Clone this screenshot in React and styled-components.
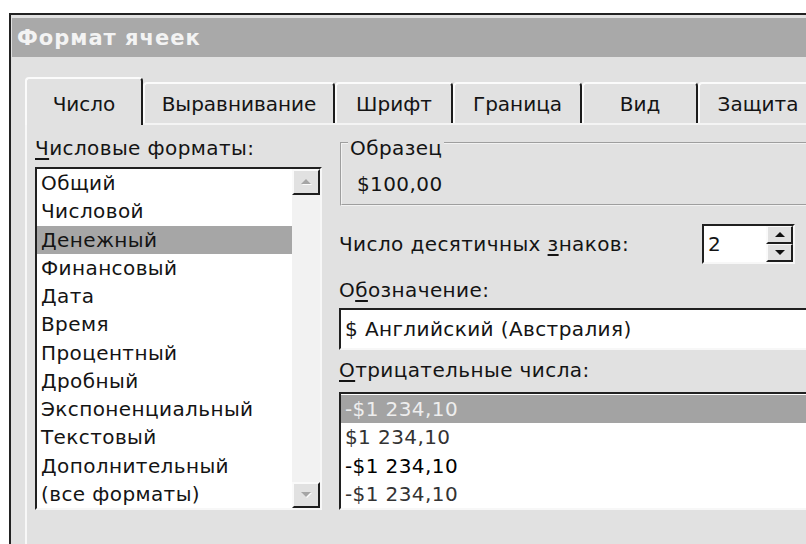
import React from "react";
import styled, { createGlobalStyle } from "styled-components";

const GlobalStyle = createGlobalStyle`
  html, body {
    margin: 0;
    padding: 0;
    background: #fff;
    overflow: hidden;
  }
  body {
    font-family: "DejaVu Sans", "Liberation Sans", sans-serif;
    font-size: 20px;
    color: #141414;
  }
`;

const Page = styled.div`
  width: 806px;
  height: 544px;
  padding: 13px 0 0 9px;
  box-sizing: border-box;
  overflow: hidden;
`;

const Dialog = styled.div`
  width: 860px;
  height: 560px;
  background: #e1e1e1;
  border-top: 2px solid #222;
  border-left: 2px solid #222;
  padding: 3px 0 0 1px;
  box-sizing: border-box;
`;

const TitleBar = styled.div`
  height: 39px;
  background: #a9a9a9;
  color: #f3f3f3;
  font-weight: bold;
  font-size: 21px;
  display: flex;
  align-items: center;
  padding-left: 5px;
  letter-spacing: 1px;
`;

const Body = styled.div`
  padding: 20px 0 0 13px;
`;

const TabStrip = styled.div`
  display: flex;
  align-items: flex-end;
  height: 46px;
  position: relative;
  z-index: 1;
`;

const Tab = styled.div`
  flex: none;
  width: ${(p) => p.$width}px;
  height: ${(p) => (p.$active ? 48 : 41)}px;
  margin-bottom: ${(p) => (p.$active ? -2 : 0)}px;
  box-sizing: border-box;
  background: #e1e1e1;
  border-top: 2px solid #fbfbfb;
  border-left: 2px solid #fbfbfb;
  border-right: 2px solid #1c1c1c;
  border-radius: 4px 4px 0 0;
  padding-top: ${(p) => (p.$active ? 15 : 10)}px;
  line-height: 20px;
  text-align: center;
  white-space: nowrap;
`;

const Panel = styled.div`
  border-top: 2px solid #f4f4f4;
  border-left: 2px solid #f8f8f8;
  padding: 3px 0 0 8px;
  height: 420px;
  display: grid;
  grid-template-columns: 287px 500px;
  column-gap: 17px;
  align-items: start;
`;

const Column = styled.div`
  display: flex;
  flex-direction: column;
  margin-top: ${(p) => p.$offset || 0}px;
`;

const Label = styled.div`
  line-height: 20px;
  height: 20px;
  white-space: nowrap;
  letter-spacing: 0.4px;
  margin-top: ${(p) => p.$gap || 0}px;
  flex: none;
`;

const Key = styled.span`
  text-decoration: underline;
  text-underline-offset: 3px;
`;

const Sunken = styled.div`
  box-sizing: border-box;
  border-top: 2px solid #202020;
  border-left: 2px solid #202020;
  border-right: 2px solid #f7f7f7;
  border-bottom: 2px solid #f7f7f7;
  background: #fff;
`;

const FormatList = styled(Sunken)`
  margin-top: 9px;
  height: 343px;
  display: flex;
`;

const Items = styled.div`
  flex: 1;
  display: flex;
  flex-direction: column;
`;

const Item = styled.div`
  height: 28.25px;
  line-height: 28.25px;
  padding-left: 4px;
  white-space: nowrap;
  letter-spacing: 0.4px;
  background: ${(p) => (p.$selected ? p.$hl || "#a6a6a6" : "transparent")};
  color: ${(p) => p.$color || "#141414"};
`;

const ScrollBar = styled.div`
  width: 28px;
  flex: none;
  display: flex;
  flex-direction: column;
  background: #f2f2f2;
`;

const ScrollButton = styled.div`
  height: 26px;
  box-sizing: border-box;
  background: #e1e1e1;
  border-top: 2px solid #fafafa;
  border-left: 2px solid #fafafa;
  border-right: 2px solid #1e1e1e;
  border-bottom: 2px solid #1e1e1e;
  display: flex;
  align-items: center;
  justify-content: center;
`;

const Track = styled.div`
  flex: 1;
`;

const GroupBox = styled.fieldset`
  margin: 0 0 0 1px;
  padding: 0 0 10px 6px;
  border: 2px groove #f2f2f2;
  min-width: 0;
`;

const Legend = styled.legend`
  padding: 10px 2px 0;
  line-height: 20px;
  letter-spacing: 0.4px;
`;

const Sample = styled.div`
  margin-top: 16px;
  padding-left: 9px;
  line-height: 20px;
  letter-spacing: 0.4px;
`;

const SpinRow = styled.div`
  display: flex;
  align-items: center;
  height: 40px;
  margin-top: 18px;
`;

const SpinLabel = styled(Label)`
  width: 363px;
`;

const Spinner = styled(Sunken)`
  width: 93px;
  height: 40px;
  display: flex;
`;

const SpinValue = styled.div`
  flex: 1;
  padding: 4px 0 0 4px;
  line-height: 28px;
`;

const SpinButtons = styled.div`
  width: 27px;
  display: flex;
  flex-direction: column;
  background: #e1e1e1;
`;

const SpinButton = styled.div`
  flex: 1;
  box-sizing: border-box;
  border-top: 1px solid #fafafa;
  border-left: 2px solid #fafafa;
  border-right: 2px solid #1e1e1e;
  border-bottom: 2px solid #1e1e1e;
  display: flex;
  align-items: center;
  justify-content: center;
`;

const Combo = styled(Sunken)`
  margin-top: 8px;
  height: 42px;
  padding-left: 4px;
  line-height: 38px;
  letter-spacing: 0.4px;
  white-space: nowrap;
`;

const NegativeList = styled(Sunken)`
  margin-top: 12px;
  height: 118px;
  padding-top: 1px;
`;

const Arrow = ({ up, disabled }) => (
  <svg width="12" height="8" viewBox="0 0 12 8">
    {disabled && (
      <polygon
        points={up ? "2,7 7,2 12,7" : "2,2 12,2 7,7"}
        fill="#fbfbfb"
      />
    )}
    <polygon
      points={up ? "1,6 6,1 11,6" : "1,1 11,1 6,6"}
      fill={disabled ? "#a5a5a5" : "#111"}
    />
  </svg>
);

const tabs = [
  { name: "Число", width: 118, active: true },
  { name: "Выравнивание", width: 192 },
  { name: "Шрифт", width: 118 },
  { name: "Граница", width: 129 },
  { name: "Вид", width: 116 },
  { name: "Защита", width: 120 },
];

const formats = [
  "Общий",
  "Числовой",
  "Денежный",
  "Финансовый",
  "Дата",
  "Время",
  "Процентный",
  "Дробный",
  "Экспоненциальный",
  "Текстовый",
  "Дополнительный",
  "(все форматы)",
];

const negatives = [
  { text: "-$1 234,10", selected: true, color: "#eeeeee" },
  { text: "$1 234,10", color: "#333" },
  { text: "-$1 234,10", color: "#000" },
  { text: "-$1 234,10", color: "#333" },
];

export default function App() {
  return (
    <>
      <GlobalStyle />
      <Page>
        <Dialog>
          <TitleBar>Формат ячеек</TitleBar>
          <Body>
            <TabStrip>
              {tabs.map((t) => (
                <Tab key={t.name} $width={t.width} $active={t.active}>
                  {t.name}
                </Tab>
              ))}
            </TabStrip>
            <Panel>
              <Column $offset={10}>
                <Label>
                  <Key>Ч</Key>исловые форматы:
                </Label>
                <FormatList>
                  <Items>
                    {formats.map((f) => (
                      <Item key={f} $selected={f === "Денежный"}>
                        {f}
                      </Item>
                    ))}
                  </Items>
                  <ScrollBar>
                    <ScrollButton>
                      <Arrow up disabled />
                    </ScrollButton>
                    <Track />
                    <ScrollButton>
                      <Arrow disabled />
                    </ScrollButton>
                  </ScrollBar>
                </FormatList>
              </Column>
              <Column>
                <GroupBox>
                  <Legend>Образец</Legend>
                  <Sample>$100,00</Sample>
                </GroupBox>
                <SpinRow>
                  <SpinLabel>
                    Число десятичных <Key>з</Key>наков:
                  </SpinLabel>
                  <Spinner>
                    <SpinValue>2</SpinValue>
                    <SpinButtons>
                      <SpinButton>
                        <Arrow up />
                      </SpinButton>
                      <SpinButton>
                        <Arrow />
                      </SpinButton>
                    </SpinButtons>
                  </Spinner>
                </SpinRow>
                <Label $gap={16}>
                  О<Key>б</Key>означение:
                </Label>
                <Combo>$ Английский (Австралия)</Combo>
                <Label $gap={10}>
                  <Key>О</Key>трицательные числа:
                </Label>
                <NegativeList>
                  {negatives.map((n, i) => (
                    <Item
                      key={i}
                      $selected={n.selected}
                      $hl="#a3a3a3"
                      $color={n.color}
                    >
                      {n.text}
                    </Item>
                  ))}
                </NegativeList>
              </Column>
            </Panel>
          </Body>
        </Dialog>
      </Page>
    </>
  );
}
